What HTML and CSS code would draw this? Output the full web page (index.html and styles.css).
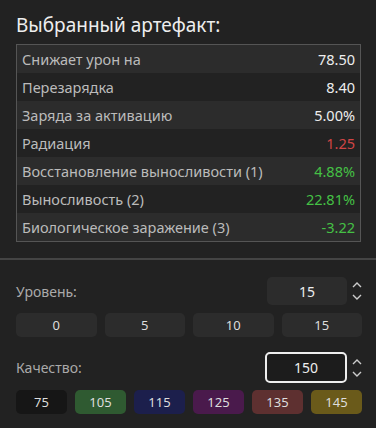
FILE: index.html
```html
<!DOCTYPE html>
<html lang="ru">
<head>
  <meta charset="UTF-8">
  <title>Артефакт</title>
  <link rel="stylesheet" href="styles.css">
</head>
<body>
  <div class="panel">
    <h2>Выбранный артефакт:</h2>
    <table class="stats">
      <tr><td>Снижает урон на</td><td class="val">78.50</td></tr>
      <tr><td>Перезарядка</td><td class="val">8.40</td></tr>
      <tr><td>Заряда за активацию</td><td class="val">5.00%</td></tr>
      <tr><td>Радиация</td><td class="val bad">1.25</td></tr>
      <tr><td>Восстановление выносливости (1)</td><td class="val good">4.88%</td></tr>
      <tr><td>Выносливость (2)</td><td class="val good">22.81%</td></tr>
      <tr><td>Биологическое заражение (3)</td><td class="val good">-3.22</td></tr>
    </table>
  </div>

  <div class="controls">
    <div class="field">
      <span class="label">Уровень:</span>
      <div class="spin">
        <div class="num">15</div>
        <div class="arrows">
          <svg width="10" height="7" viewBox="0 0 10 7"><path d="M1 6 L5 2 L9 6" fill="none" stroke="#ccc" stroke-width="1.4"/></svg>
          <svg width="10" height="7" viewBox="0 0 10 7"><path d="M1 1 L5 5 L9 1" fill="none" stroke="#ccc" stroke-width="1.4"/></svg>
        </div>
      </div>
    </div>
    <div class="presets four">
      <div class="preset">0</div>
      <div class="preset">5</div>
      <div class="preset">10</div>
      <div class="preset">15</div>
    </div>

    <div class="field tight">
      <span class="label">Качество:</span>
      <div class="spin">
        <div class="num focused">150</div>
        <div class="arrows">
          <svg width="10" height="7" viewBox="0 0 10 7"><path d="M1 6 L5 2 L9 6" fill="none" stroke="#ccc" stroke-width="1.4"/></svg>
          <svg width="10" height="7" viewBox="0 0 10 7"><path d="M1 1 L5 5 L9 1" fill="none" stroke="#ccc" stroke-width="1.4"/></svg>
        </div>
      </div>
    </div>
    <div class="presets six">
      <div class="preset q75">75</div>
      <div class="preset q105">105</div>
      <div class="preset q115">115</div>
      <div class="preset q125">125</div>
      <div class="preset q135">135</div>
      <div class="preset q145">145</div>
    </div>
  </div>
</body>
</html>
```

FILE: styles.css
```css
body {
  margin: 0;
  background: #222;
  color: #eee;
  font-family: "Noto Sans", sans-serif;
}

.panel {
  padding: 11px 15px 16px 16px;
  border-bottom: 2px solid #444;
}

h2 {
  margin: 0 0 5px;
  font-size: 19px;
  line-height: 28px;
  font-weight: 400;
  color: #eee;
}

.stats {
  width: 100%;
  border-collapse: collapse;
  border: 1px solid #555;
  font-size: 14.5px;
}

.stats td {
  height: 28px;
  padding: 0 5px;
  color: #bbb;
}

.stats tr:nth-child(odd) {
  background: #2c2c2c;
}

.stats .val {
  text-align: right;
  color: #eee;
}

.stats .bad {
  color: #d04545;
}

.stats .good {
  color: #45c045;
}

.controls {
  padding: 17px 14px 0 16px;
}

.field {
  display: flex;
  align-items: center;
  justify-content: space-between;
  margin-bottom: 8px;
}

.field.tight {
  margin-bottom: 7px;
}

.label {
  font-size: 14px;
  color: #aaa;
}

.spin {
  display: flex;
  align-items: center;
  gap: 5px;
}

.num {
  width: 80px;
  height: 28px;
  box-sizing: border-box;
  background: #2c2c2c;
  border-radius: 5px;
  display: flex;
  align-items: center;
  justify-content: center;
  font-size: 14px;
  color: #eee;
}

.num.focused {
  height: 31px;
  width: 82px;
  background: #1c1c1c;
  border: 2px solid #eee;
}

.arrows {
  display: flex;
  flex-direction: column;
  gap: 6px;
}

.arrows svg {
  display: block;
}

.presets {
  display: grid;
  gap: 8px;
  margin-bottom: 14px;
}

.four {
  grid-template-columns: repeat(4, 1fr);
  margin-bottom: 15px;
}

.six {
  grid-template-columns: repeat(6, 1fr);
}

.preset {
  height: 24px;
  background: #2c2c2c;
  border-radius: 5px;
  display: flex;
  align-items: center;
  justify-content: center;
  font-size: 13px;
  color: #ddd;
}

.q75 { background: #161616; }
.q105 { background: #2f5a31; }
.q115 { background: #1c1f4c; }
.q125 { background: #4a1a4c; }
.q135 { background: #5e3030; }
.q145 { background: #6a5a1a; }
```
